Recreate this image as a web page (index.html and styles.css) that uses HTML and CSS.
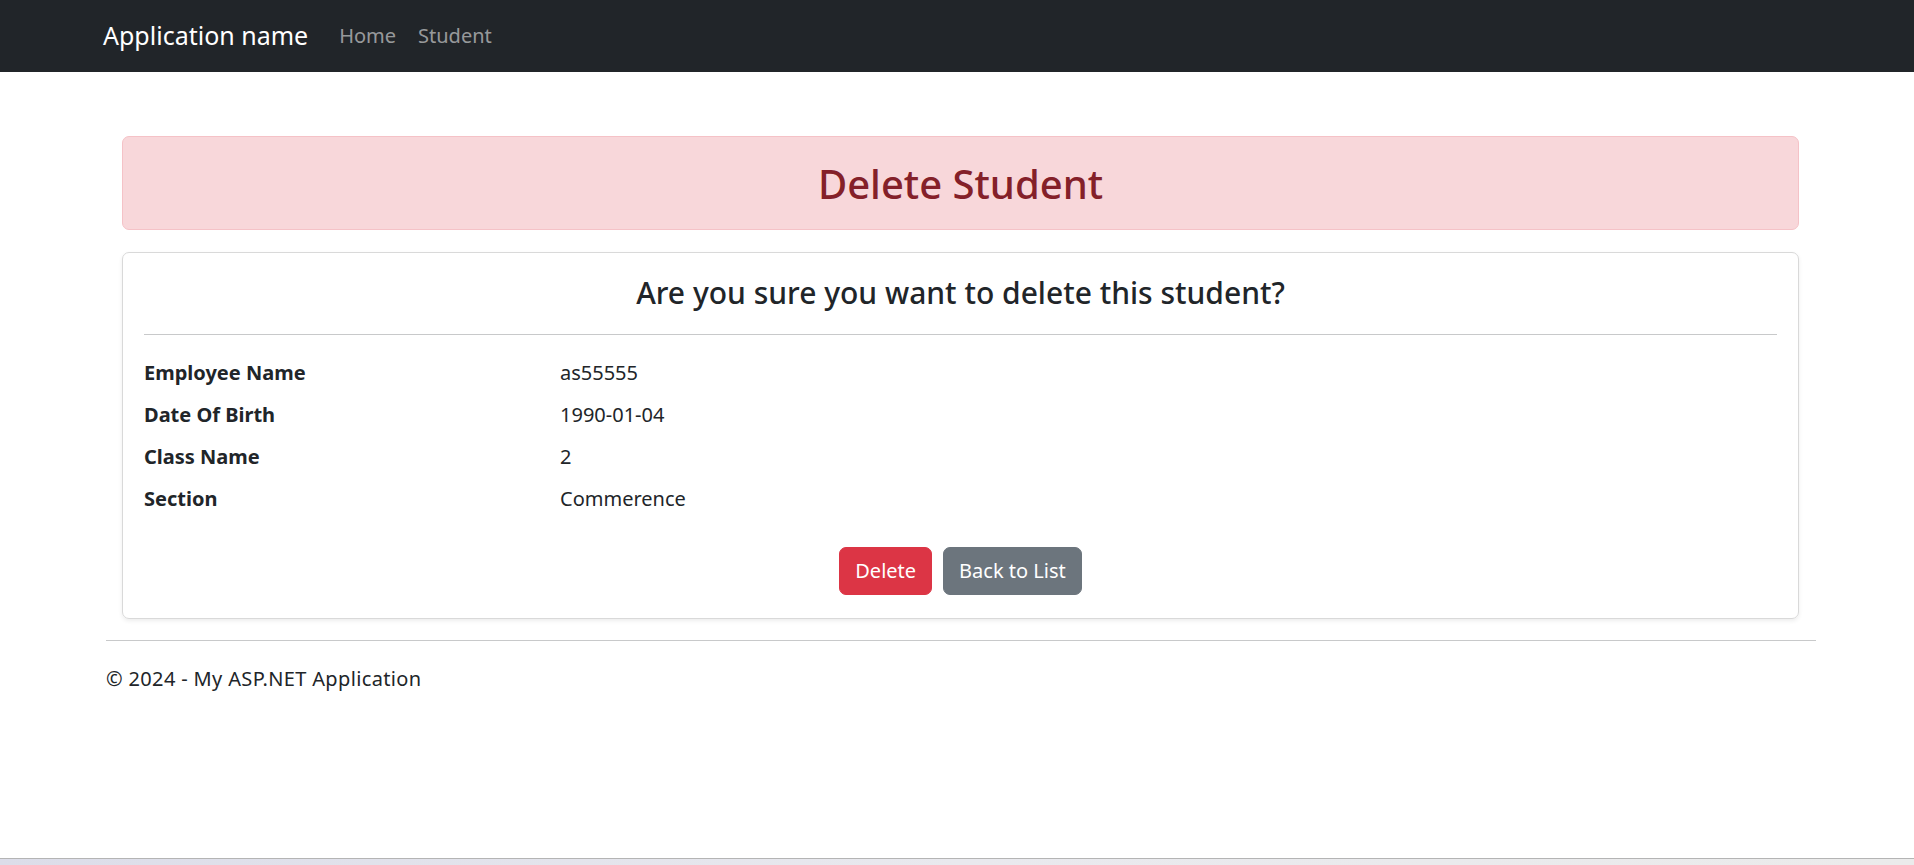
FILE: index.html
```html
<!DOCTYPE html>
<html lang="en">
<head>
<meta charset="utf-8">
<title>Delete Student - My ASP.NET Application</title>
<link rel="stylesheet" href="styles.css">
</head>
<body>
<nav class="navbar">
  <a class="brand" href="#">Application name</a>
  <ul class="nav">
    <li><a class="nav-link" href="#">Home</a></li>
    <li><a class="nav-link" href="#">Student</a></li>
  </ul>
</nav>
<div class="page">
  <main class="content">
    <div class="alert">
      <h2 class="alert-title">Delete Student</h2>
    </div>
    <div class="card">
      <h4 class="card-title">Are you sure you want to delete this student?</h4>
      <hr class="card-rule">
      <dl class="details">
        <dt>Employee Name</dt><dd>as55555</dd>
        <dt>Date Of Birth</dt><dd>1990-01-04</dd>
        <dt>Class Name</dt><dd>2</dd>
        <dt>Section</dt><dd>Commerence</dd>
      </dl>
      <div class="actions">
        <button class="btn btn-danger" type="submit">Delete</button>
        <a class="btn btn-secondary" href="#">Back to List</a>
      </div>
    </div>
  </main>
  <hr class="footer-rule">
  <footer class="footer">
    <p>&copy; 2024 - My ASP.NET Application</p>
  </footer>
</div>
<div class="taskbar"></div>
</body>
</html>
```

FILE: styles.css
```css
* { box-sizing: border-box; }
html, body { margin: 0; padding: 0; }
body {
  font-family: "Noto Sans", "Open Sans", sans-serif;
  font-size: 20px;
  line-height: 1.5;
  color: #212529;
  background: #fff;
}
.navbar {
  height: 72px;
  background: #212529;
  display: flex;
  align-items: center;
  padding-left: 103px;
}
.brand {
  color: #fff;
  text-decoration: none;
  font-size: 25px;
  margin-right: 31px;
}
.nav { display: flex; gap: 22px; list-style: none; margin: 0; padding: 0; }
.nav-link { color: rgba(255,255,255,.55); text-decoration: none; font-size: 20px; }
.page { margin: 0 98px 0 106px; }
.content { padding: 64px 17px 0 16px; }
.alert {
  background: #f8d7da;
  border: 1px solid #f5c2c7;
  border-radius: 7px;
  color: #842029;
  padding: 20px;
  height: 94px;
  display: flex;
  align-items: center;
  justify-content: center;
}
.alert-title { margin: 2px 0 0; font-size: 40px; font-weight: 500; line-height: 1.2; }
.card {
  margin-top: 22px;
  border: 1px solid #d9d9d9;
  border-radius: 7px;
  box-shadow: 0 2px 4px rgba(0,0,0,.075);
  padding: 22px 21px 23px 21px;
}
.card-title { margin: 0; text-align: center; font-size: 30px; font-weight: 500; line-height: 1.2; }
.card-rule { margin: 23px 0 23px; border: 0; border-top: 1px solid #c8c9ca; }
.details { display: grid; grid-template-columns: 416px 1fr; margin: 0; row-gap: 12px; }
.details dt { font-weight: 700; }
.details dd { margin: 0; }
.actions { display: flex; justify-content: center; gap: 11px; margin-top: 33px; }
.btn {
  display: inline-block;
  font-family: inherit;
  font-size: 20px;
  line-height: 30px;
  padding: 8px 15px;
  border: 1px solid transparent;
  border-radius: 7px;
  color: #fff;
  text-decoration: none;
  cursor: pointer;
}
.btn-danger { background: #dc3545; border-color: #dc3545; }
.btn-secondary { background: #6c757d; border-color: #6c757d; }
.footer-rule { margin: 21px 0 0; border: 0; border-top: 1px solid #c8c9ca; }
.footer p { margin: 23px 0 0; letter-spacing: .35px; }
.taskbar {
  position: fixed; left: 0; right: 0; bottom: 0; height: 7px;
  border-top: 1px solid #b4b4b4;
  background: linear-gradient(90deg, #dcdde9, #e9e9ee 50%, #ebebeb);
}
```
